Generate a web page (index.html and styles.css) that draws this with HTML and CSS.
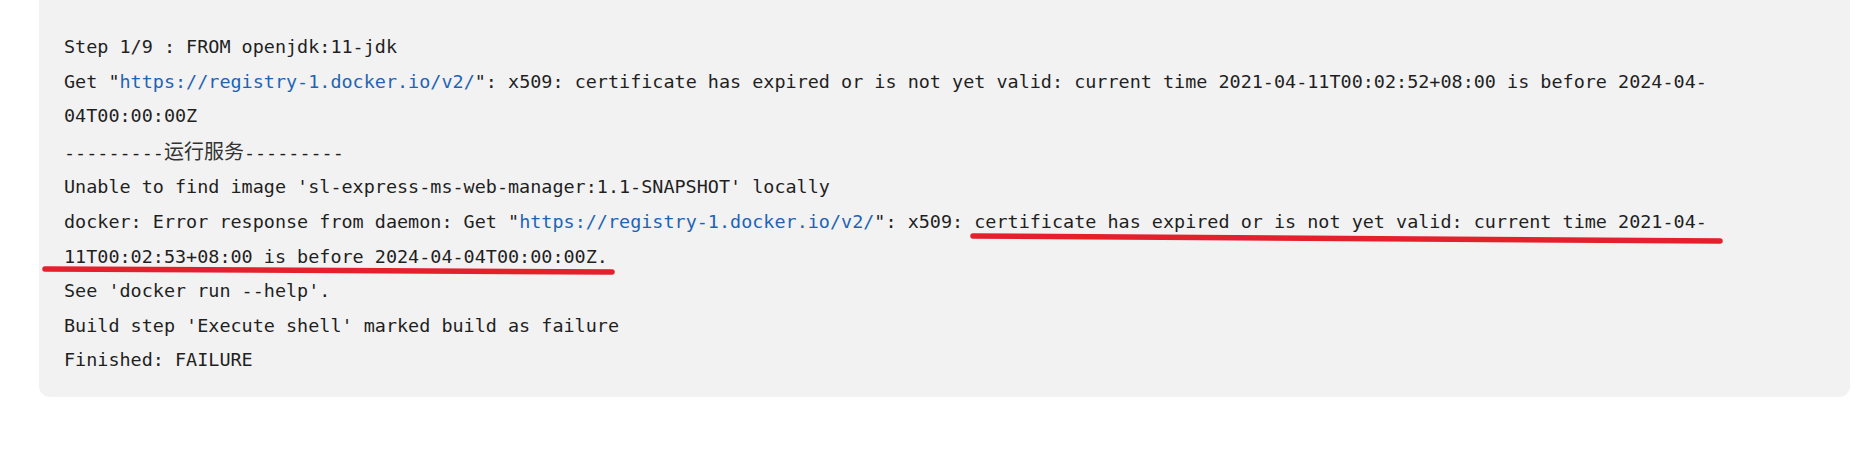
FILE: index.html
```html
<!DOCTYPE html>
<html lang="zh-CN">
  <head>
    <meta charset="UTF-8" />
    <title>Build log</title>
    <link rel="stylesheet" href="styles.css">
  </head>
  <body>
    <div class="code-box">
      <pre class="log">Step 1/9 : FROM openjdk:11-jdk
Get "<a href="#">https://registry-1.docker.io/v2/</a>": x509: certificate has expired or is not yet valid: current time 2021-04-11T00:02:52+08:00 is before 2024-04-04T00:00:00Z
---------<span class="cjk">运行服务</span>---------
Unable to find image 'sl-express-ms-web-manager:1.1-SNAPSHOT' locally
docker: Error response from daemon: Get "<a href="#">https://registry-1.docker.io/v2/</a>": x509: certificate has expired or is not yet valid: current time 2021-04-11T00:02:53+08:00 is before 2024-04-04T00:00:00Z.
See 'docker run --help'.
Build step 'Execute shell' marked build as failure
Finished: FAILURE</pre>
      <svg class="marks" width="1811" height="400" viewBox="0 0 1811 400">
        <path d="M934 236 L1681 241" />
        <path d="M6 269 L573 272" />
      </svg>
    </div>
  </body>
</html>
```

FILE: styles.css
```css
body {
  margin: 0;
  background-color: #ffffff;
}

.code-box {
  position: relative;
  width: 1811px;
  margin-left: 39px;
  padding: 30px 0 19px 25px;
  box-sizing: border-box;
  background-color: #f2f2f2;
  border-radius: 0 0 11px 11px;
}

.log {
  margin: 0;
  width: 1650px;
  font-family: "DejaVu Sans Mono", "Liberation Mono", "Noto Sans CJK SC", monospace;
  font-size: 18.45px;
  line-height: 34.6px;
  color: #1f1f1f;
  white-space: pre-wrap;
  word-break: break-all;
}
.log a {
  color: #1e64b4;
  text-decoration: none;
}
.cjk {
  font-family: "Noto Sans CJK SC", sans-serif;
  font-size: 20px;
  line-height: 34.6px;
  color: #333333;
}

/* red hand-drawn underlines */
.marks {
  position: absolute;
  top: 0;
  left: 0;
  pointer-events: none;
}
.marks path {
  fill: none;
  stroke: #e3202b;
  stroke-width: 5.5;
  stroke-linecap: round;
}
```
